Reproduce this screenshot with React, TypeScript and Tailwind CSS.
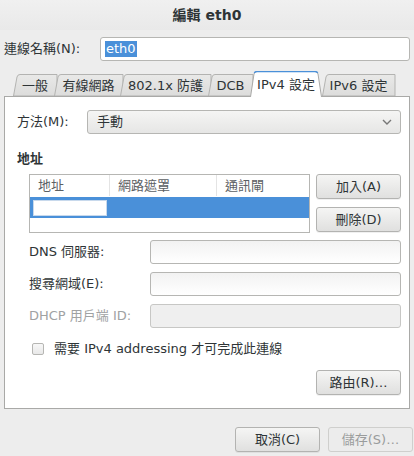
const tabs = [
  { label: "一般", w: "w-[41px]", px: 41 },
  { label: "有線網路", w: "w-[66px]", px: 66 },
  { label: "802.1x 防護", w: "w-[88px]", px: 88 },
  { label: "DCB", w: "w-[42px]", px: 42 },
  { label: "IPv4 設定", w: "w-[72px]", px: 72, active: true },
  { label: "IPv6 設定", w: "w-[70px]", px: 70 },
];

function Tab({ label, w, px, active }: { label: string; w: string; px: number; active?: boolean }) {
  const h = active ? 26 : 22;
  return (
    <div className={`relative ${w} ${active ? "h-[26px] z-10" : "h-[22px] mb-[1px]"} flex items-center justify-center`}>
      <svg className="absolute inset-0" width={px + 4} height={h} viewBox={`0 0 ${px + 4} ${h}`}>
        <defs>
          <linearGradient id="tabg" x1="0" y1="0" x2="0" y2="1">
            <stop offset="0" stopColor="#e9e9e8" />
            <stop offset="1" stopColor="#dcdcdb" />
          </linearGradient>
        </defs>
        {active ? (
          <>
            <path d={`M0.5 ${h} L4 3 Q4.6 0.5 7 0.5 L${px - 7} 0.5 Q${px - 4.6} 0.5 ${px - 4} 3 L${px - 0.5} ${h} Z`} fill="#ffffff" />
            <path d={`M0.5 ${h} L4 3 Q4.6 0.5 7 0.5 L${px - 7} 0.5 Q${px - 4.6} 0.5 ${px - 4} 3 L${px - 0.5} ${h}`} fill="none" stroke="#a9a9a7" />
            <path d={`M4.3 2 Q5 0.6 7 0.6 L${px - 7} 0.6 Q${px - 5} 0.6 ${px - 4.3} 2`} fill="none" stroke="#4a90d9" strokeWidth="1.4" />
          </>
        ) : (
          <path d={`M0.5 ${h} L4 3 Q4.6 0.5 7 0.5 L${px + 3} 0.5 L${px + 3} ${h} Z`} fill="url(#tabg)" stroke="#b3b3b1" />
        )}
      </svg>
      <span className={`relative ${active ? "pt-[1px]" : "pt-[1px] pl-[3px]"} text-[13px] text-[#2e3436]`}>{label}</span>
    </div>
  );
}

function Button({ children, disabled, className = "" }: { children: React.ReactNode; disabled?: boolean; className?: string }) {
  return (
    <div
      className={`h-[25px] flex items-center justify-center rounded-[3px] border text-[13px] ${
        disabled
          ? "border-[#cfcfcd] bg-[#ececec] text-[#9a9c9c]"
          : "border-[#b3b3b1] bg-gradient-to-b from-[#f5f5f4] to-[#e0e0df] text-[#2e3436] shadow-[0_1px_0_rgba(0,0,0,0.06)]"
      } ${className}`}
    >
      {children}
    </div>
  );
}

function Entry({ disabled }: { disabled?: boolean }) {
  return (
    <div
      className={`w-[251px] h-[24px] rounded-[3px] border ${
        disabled ? "border-[#c7c7c5] bg-[#efefef]" : "border-[#b6b6b3] bg-gradient-to-b from-[#f2f2f2] to-[#ffffff]"
      }`}
    />
  );
}

export default function App() {
  return (
    <div className="w-[414px] h-[456px] bg-[#ededed] flex flex-col text-[13px] text-[#2e3436] font-['DejaVu_Sans','Noto_Sans_CJK_TC',sans-serif] overflow-hidden">
      <div className="h-[30px] flex items-center justify-center font-bold text-[14px] text-[#2e3436] bg-gradient-to-b from-[#f0f0f0] to-[#e9e9e9]">
        編輯 eth0
      </div>

      <div className="mt-[7px] h-[24px] pl-[4px] pr-[4px] flex items-center">
        <span className="w-[96px]">連線名稱(N):</span>
        <div className="flex-1 h-[24px] rounded-[3px] border border-[#b6b6b3] bg-white flex items-center pl-[4px]">
          <span className="bg-[#4a90d9] text-white leading-[16px] px-[1px]">eth0</span>
        </div>
      </div>

      <div className="mt-[10px] pl-[13px] h-[26px] flex items-end">
        {tabs.map((t) => (
          <Tab key={t.label} {...t} />
        ))}
      </div>

      <div className="mx-[4px] -mt-[1px] h-[313px] bg-white border border-[#a9a9a7] pl-[12px] pr-[8px] pt-[13px]">
        <div className="h-[24px] flex items-center">
          <span className="w-[70px]">方法(M):</span>
          <div className="flex-1 h-[24px] rounded-[3px] border border-[#b6b6b3] bg-gradient-to-b from-[#f5f5f4] to-[#e6e6e5] flex items-center justify-between pl-[9px] pr-[8px]">
            <span>手動</span>
            <svg width="10" height="6" viewBox="0 0 10 6">
              <path d="M1 1 L5 5 L9 1" fill="none" stroke="#777" strokeWidth="1.4" />
            </svg>
          </div>
        </div>

        <div className="mt-[17px] font-bold h-[16px] leading-[16px]">地址</div>

        <div className="mt-[7px] pl-[12px] flex gap-[6px]">
          <div className="w-[281px] h-[59px] border border-[#b6b6b3] bg-white flex flex-col">
            <div className="h-[22px] flex text-[#5c6063] border-b border-transparent">
              <div className="w-[80px] pl-[8px] flex items-center border-r border-[#e4e4e4]">地址</div>
              <div className="w-[107px] pl-[8px] flex items-center border-r border-[#e4e4e4]">網路遮罩</div>
              <div className="flex-1 pl-[8px] flex items-center">通訊閘</div>
            </div>
            <div className="h-[21px] bg-[#4a90d9] flex items-center pl-[3px]">
              <div className="w-[74px] h-[16px] bg-white border border-[#c8d9ec]" />
            </div>
          </div>
          <div className="flex flex-col gap-[8px]">
            <Button className="w-[85px]">加入(A)</Button>
            <Button className="w-[85px]">刪除(D)</Button>
          </div>
        </div>

        <div className="mt-[7px] pl-[12px] flex flex-col gap-[8px]">
          <div className="flex items-center">
            <span className="w-[121px]">DNS 伺服器:</span>
            <Entry />
          </div>
          <div className="flex items-center">
            <span className="w-[121px]">搜尋網域(E):</span>
            <Entry />
          </div>
          <div className="flex items-center">
            <span className="w-[121px] text-[#a0a2a3]">DHCP 用戶端 ID:</span>
            <Entry disabled />
          </div>
        </div>

        <div className="mt-[12px] pl-[15px] h-[18px] flex items-center">
          <div className="w-[12px] h-[12px] rounded-[2px] border border-[#b6b6b3] bg-gradient-to-b from-[#f7f7f7] to-[#e8e8e8]" />
          <span className="ml-[10px]">需要 IPv4 addressing 才可完成此連線</span>
        </div>

        <div className="mt-[12px] flex justify-end">
          <Button className="w-[85px]">路由(R)…</Button>
        </div>
      </div>

      <div className="mt-[18px] flex justify-end gap-[8px] pr-[1px]">
        <Button className="w-[85px]">取消(C)</Button>
        <Button className="w-[85px]" disabled>儲存(S)…</Button>
      </div>
    </div>
  );
}
